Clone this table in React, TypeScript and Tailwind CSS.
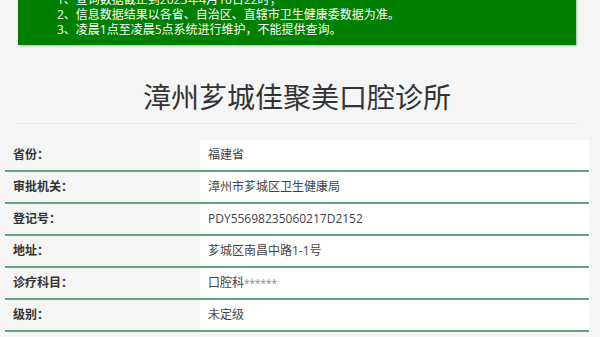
const notices = [
  "1、查询数据截止到2023年4月10日22时；",
  "2、信息数据结果以各省、自治区、直辖市卫生健康委数据为准。",
  "3、凌晨1点至凌晨5点系统进行维护，不能提供查询。",
];

const rows = [
  { label: "省份：", value: "福建省" },
  { label: "审批机关：", value: "漳州市芗城区卫生健康局" },
  { label: "登记号：", value: "PDY55698235060217D2152" },
  { label: "地址：", value: "芗城区南昌中路1-1号" },
  { label: "诊疗科目：", value: "口腔科", extra: "******" },
  { label: "级别：", value: "未定级" },
];

const font = { fontFamily: '"Open Sans", "Noto Sans CJK SC", sans-serif' };

export default function App() {
  return (
    <div className="w-[600px] h-[337px] overflow-hidden bg-[#f5f5f5]" style={font}>
      {/* Notice box */}
      <div className="ml-[18px] w-[558px] mt-[-16px] bg-[#008000] pt-[8px] pb-[8px] pl-[39px] text-[12px] leading-[15px] text-white shadow-[1px_1px_2px_rgba(0,0,0,0.25)]">
        {notices.map((n, i) => (
          <p key={i}>{n}</p>
        ))}
      </div>

      {/* Title */}
      <div className="ml-[17px] w-[560px] mt-[32px] border-b border-[#e8e8e8] pb-[6px]">
        <h1 className="text-center text-[28px] leading-[40px] font-normal text-[#333]">
          漳州芗城佳聚美口腔诊所
        </h1>
      </div>

      {/* Detail table */}
      <div className="mx-[5px] mt-[16px] w-[584px]">
        {rows.map((r, i) => (
          <div key={i} className="flex h-[32px] border-b-2 border-[#62a37c]">
            <div className="w-[195px] flex items-center pl-[8px] text-[12px] font-bold text-[#333]">
              {r.label}
            </div>
            <div className="flex-1 flex items-center bg-white pl-[8px] text-[12px] text-[#444]">
              {r.value}
              {r.extra && <span className="text-[10px] text-[#888]">{r.extra}</span>}
            </div>
          </div>
        ))}
      </div>
    </div>
  );
}
